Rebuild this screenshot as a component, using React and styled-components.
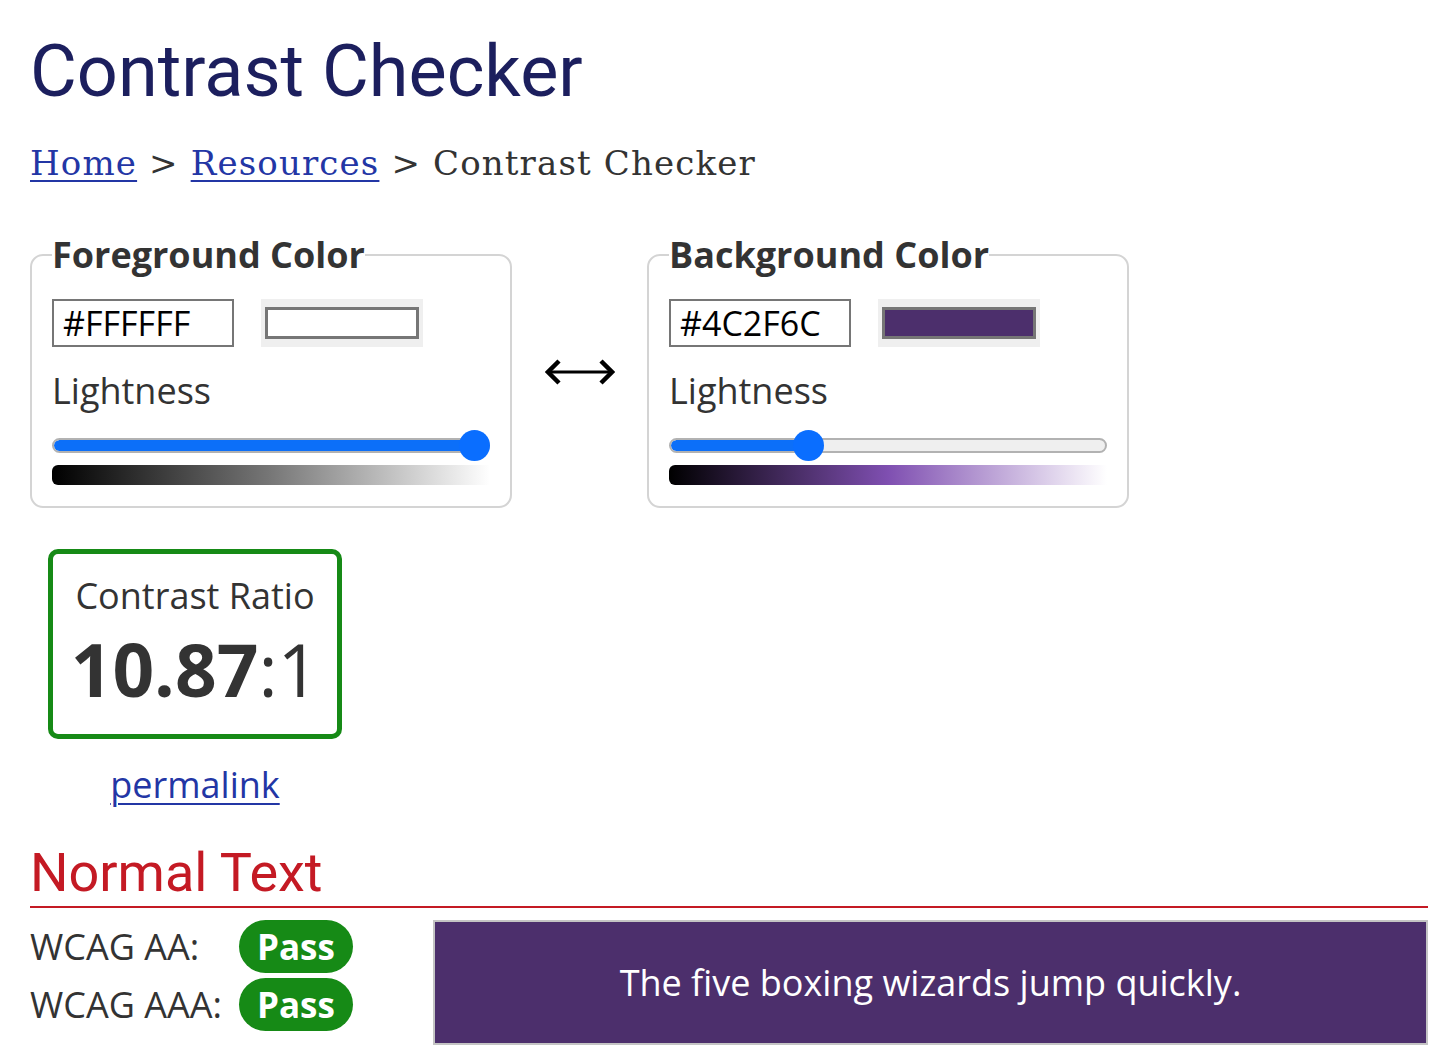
import React from "react";
import styled, { createGlobalStyle } from "styled-components";

const Global = createGlobalStyle`
  html, body { margin: 0; padding: 0; background: #fff; }
  body { font-family: "Open Sans", "DejaVu Sans", sans-serif; color: #333; }
`;

const Page = styled.div`
  padding: 29px 19px 0 30px;
`;

const Title = styled.h1`
  margin: 0;
  font-family: Roboto, "Liberation Sans", sans-serif;
  font-weight: 400;
  font-size: 72px;
  line-height: 86px;
  color: #1c1f5e;
`;

const Crumbs = styled.nav`
  margin-top: 28px;
  font-family: "DejaVu Serif", "Liberation Serif", serif;
  font-size: 34px;
  letter-spacing: 1.15px;
  line-height: 40px;
  color: #333;
  a { color: #2336a5; text-decoration: underline; text-underline-offset: 5px; text-decoration-thickness: 2px; }
`;

const PickerRow = styled.div`
  margin-top: 51px;
  display: flex;
  align-items: stretch;
`;

const Field = styled.fieldset`
  margin: 0;
  width: 482px;
  box-sizing: border-box;
  border: 2px solid #d4d4d4;
  border-radius: 13px;
  padding: 23px 20px 21px 20px;
  min-inline-size: 0;
`;

const Legend = styled.legend`
  padding: 0;
  font-weight: 700;
  font-size: 36px;
  line-height: 42px;
  color: #333;
`;

const InputRow = styled.div`
  display: flex;
  align-items: center;
  gap: 27px;
`;

const HexInput = styled.div`
  width: 182px;
  height: 48px;
  box-sizing: border-box;
  border: 2px solid #767676;
  padding-left: 9px;
  font-size: 34px;
  line-height: 44px;
  color: #000;
`;

const Swatch = styled.div`
  width: 162px;
  height: 48px;
  box-sizing: border-box;
  background: #efefef;
  padding: 8px 4px;
  display: flex;
`;

const SwatchColor = styled.div`
  flex: 1;
  border: 3px solid #767676;
  background: ${(p) => p.$color};
`;

const Label = styled.div`
  margin-top: 23px;
  font-size: 36px;
  line-height: 42px;
  color: #333;
`;

const SliderWrap = styled.div`
  position: relative;
  margin-top: 18px;
  height: 31px;
  display: flex;
  align-items: center;
`;

const Track = styled.div`
  width: 100%;
  height: 15px;
  box-sizing: border-box;
  border-radius: 8px;
  background: #efefef;
  border: 2px solid #b2b2b2;
  overflow: hidden;
  display: flex;
`;

const Fill = styled.div`
  height: 100%;
  background: #0c6ff9;
  border-radius: 8px 0 0 8px;
`;

const Thumb = styled.div`
  position: absolute;
  top: 0;
  width: 31px;
  height: 31px;
  border-radius: 50%;
  background: #0a6eff;
`;

const Gradient = styled.div`
  margin-top: 4px;
  height: 20px;
  border-radius: 6px 0 0 6px;
  background: ${(p) => p.$bg};
`;

const SwapCol = styled.div`
  width: 135px;
  display: flex;
  align-items: center;
  justify-content: center;
  padding-top: 4px;
  box-sizing: border-box;
`;

const SwapButton = styled.button`
  border: 0;
  background: none;
  padding: 0;
  display: block;
  cursor: pointer;
`;

const RatioCol = styled.div`
  margin-top: 41px;
  margin-left: 18px;
  display: inline-flex;
  flex-direction: column;
  align-items: center;
`;

const RatioBox = styled.div`
  width: 294px;
  height: 190px;
  box-sizing: border-box;
  border: 5px solid #168a16;
  border-radius: 10px;
  display: flex;
  flex-direction: column;
  align-items: center;
  padding-top: 20px;
`;

const RatioLabel = styled.div`
  font-size: 36px;
  line-height: 44px;
  color: #333;
`;

const RatioValue = styled.div`
  margin-top: 6px;
  font-size: 73px;
  line-height: 90px;
  color: #333;
  b { font-weight: 700; }
`;

const Permalink = styled.a`
  margin-top: 24px;
  font-size: 36px;
  line-height: 44px;
  color: #2336a5;
  text-decoration: underline;
  text-underline-offset: 5px;
  text-decoration-thickness: 2px;
`;

const SectionTitle = styled.h2`
  margin: 35px 0 0 0;
  font-family: Roboto, "Liberation Sans", sans-serif;
  font-weight: 400;
  font-size: 54px;
  line-height: 62px;
  color: #c41a24;
  border-bottom: 2px solid #c41a24;
  padding-bottom: 2px;
`;

const ResultRow = styled.div`
  margin-top: 12px;
  display: flex;
  align-items: flex-start;
`;

const Checks = styled.div`
  width: 403px;
  display: grid;
  grid-template-columns: 209px auto;
  row-gap: 5px;
  align-items: center;
  justify-items: start;
`;

const CheckLabel = styled.div`
  font-size: 36px;
  line-height: 44px;
  color: #333;
`;

const Pill = styled.span`
  display: inline-block;
  height: 53px;
  padding: 0 18px;
  border-radius: 27px;
  background: #168a16;
  color: #fff;
  font-weight: 700;
  font-size: 35px;
  line-height: 53px;
`;

const Sample = styled.div`
  flex: 1;
  height: 125px;
  box-sizing: border-box;
  border: 2px solid #c4c4c4;
  background: ${(p) => p.$bg};
  color: ${(p) => p.$fg};
  display: flex;
  align-items: center;
  justify-content: center;
  font-size: 36px;
`;

function ArrowIcon() {
  return (
    <svg width="70" height="32" viewBox="0 0 70 32" aria-hidden="true">
      <line x1="6" y1="16" x2="64" y2="16" stroke="#000" strokeWidth="3" />
      <path d="M14 5 L3 16 L14 27" fill="none" stroke="#000" strokeWidth="4.5" strokeLinejoin="miter" />
      <path d="M56 5 L67 16 L56 27" fill="none" stroke="#000" strokeWidth="4.5" strokeLinejoin="miter" />
    </svg>
  );
}

function ColorPanel({ title, hex, lightness, gradient }) {
  return (
    <Field>
      <Legend>{title}</Legend>
      <InputRow>
        <HexInput>{hex}</HexInput>
        <Swatch>
          <SwatchColor $color={hex} />
        </Swatch>
      </InputRow>
      <Label>Lightness</Label>
      <SliderWrap>
        <Track>
          <Fill style={{ width: `calc(${lightness}% + ${15.5 - lightness * 0.31}px)` }} />
        </Track>
        <Thumb style={{ left: `calc((100% - 31px) * ${lightness / 100})` }} />
      </SliderWrap>
      <Gradient $bg={gradient} />
    </Field>
  );
}

export default function App() {
  return (
    <>
      <Global />
      <Page>
        <Title>Contrast Checker</Title>
        <Crumbs>
          <a href="#">Home</a> &gt; <a href="#">Resources</a> &gt; Contrast Checker
        </Crumbs>
        <PickerRow>
          <ColorPanel
            title="Foreground Color"
            hex="#FFFFFF"
            lightness={100}
            gradient="linear-gradient(to right, #000 0%, #777 50%, #fff 100%)"
          />
          <SwapCol>
            <SwapButton aria-label="Swap colors">
              <ArrowIcon />
            </SwapButton>
          </SwapCol>
          <ColorPanel
            title="Background Color"
            hex="#4C2F6C"
            lightness={30.4}
            gradient="linear-gradient(to right, #000 0%, #7f4fb1 50%, #fff 100%)"
          />
        </PickerRow>
        <RatioCol>
          <RatioBox>
            <RatioLabel>Contrast Ratio</RatioLabel>
            <RatioValue>
              <b>10.87</b>:1
            </RatioValue>
          </RatioBox>
          <Permalink href="#">permalink</Permalink>
        </RatioCol>
        <SectionTitle>Normal Text</SectionTitle>
        <ResultRow>
          <Checks>
            <CheckLabel>WCAG AA:</CheckLabel>
            <Pill>Pass</Pill>
            <CheckLabel>WCAG AAA:</CheckLabel>
            <Pill>Pass</Pill>
          </Checks>
          <Sample $bg="#4C2F6C" $fg="#FFFFFF">
            The five boxing wizards jump quickly.
          </Sample>
        </ResultRow>
      </Page>
    </>
  );
}
